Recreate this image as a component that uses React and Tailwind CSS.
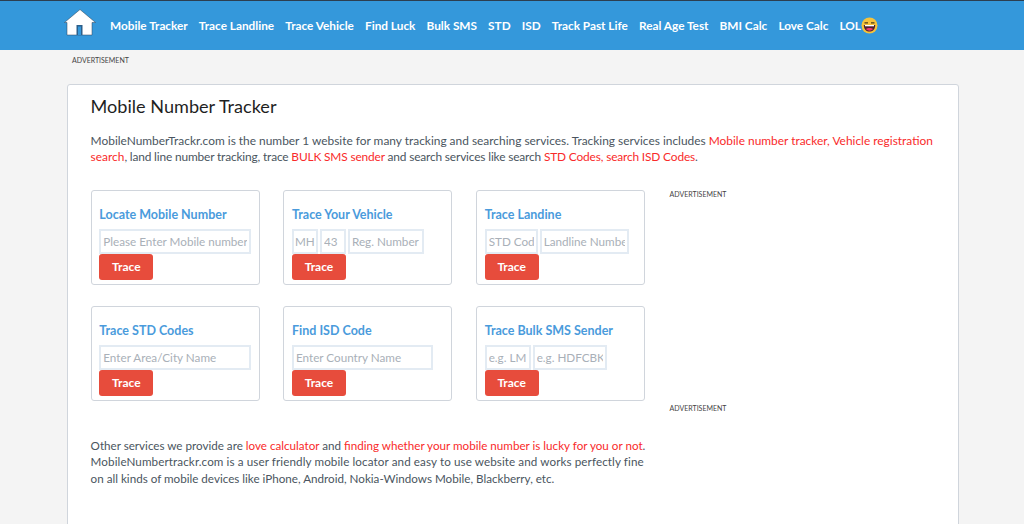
const nav = ["Mobile Tracker","Trace Landline","Trace Vehicle","Find Luck","Bulk SMS","STD","ISD","Track Past Life","Real Age Test","BMI Calc","Love Calc"];

function Home() {
  return (
    <svg width="32" height="27" viewBox="0 0 32 27" className="mb-[6px] shrink-0">
      <path d="M16 0.5 L31.5 13.5 L28 13.5 L28 26 L3 26 L3 13.5 L0.5 13.5 Z" fill="#fff" stroke="#2c3e50" strokeWidth="0.5" />
      <rect x="12.5" y="16" width="6" height="10" fill="#2c5f8a" />
      <rect x="14" y="17.5" width="3" height="8.5" fill="#3498db" />
    </svg>
  );
}

function Lol() {
  return (
    <svg width="17" height="17" viewBox="0 0 17 17" className="shrink-0">
      <circle cx="8.5" cy="8.5" r="8" fill="#f5c33b" />
      <path d="M3.5 5.8 L7 5.8 M10 5.8 L13.5 5.8" stroke="#4a3a1a" strokeWidth="1.3" />
      <path d="M2.8 8 H14.2 C14.2 12.5 11.5 14.6 8.5 14.6 C5.5 14.6 2.8 12.5 2.8 8 Z" fill="#4a2030" />
      <path d="M4 8 H13 V9.3 H4 Z" fill="#fff" />
      <path d="M5 12 C6.5 10.8 10.5 10.8 12 12 C10.5 14.2 6.5 14.2 5 12 Z" fill="#f0386b" />
    </svg>
  );
}

function Field({ className, placeholder }) {
  return (
    <input
      readOnly
      placeholder={placeholder}
      className={"h-[25px] border-2 border-[#e3ebf3] bg-white px-[2px] text-[11.7px] text-[#555] outline-none placeholder:text-[#a9b0b8] " + className}
    />
  );
}

function Card({ title, children }) {
  return (
    <div className="h-[95px] w-[169px] rounded-[3px] border border-[#d0d5dc] bg-white px-[7.7px] pt-[15px]">
      <div className="h-[17px] text-[12.5px] font-bold leading-[17px] text-[#4a9bdc]">{title}</div>
      <div className="mt-[6px] flex h-[25px] gap-[2px]">{children}</div>
      <button className="block h-[26.5px] w-[54px] rounded-[3px] bg-[#e74c3c] text-[12px] font-bold text-white">Trace</button>
    </div>
  );
}

const Red = ({ children }) => <span className="text-[#f92a2a]">{children}</span>;

export default function App() {
  return (
    <div className="h-[524px] overflow-hidden bg-[#f4f4f4] font-['Lato','Open_Sans',sans-serif] text-[#34495e]">
      <header className="flex h-[50px] items-center border-t border-t-[#2c3e50] bg-[#3498db] pl-[64px]">
        <Home />
        <nav className="ml-[14px] flex items-center gap-[11.1px] text-[11.8px] font-bold text-white">
          {nav.map((n) => <span key={n} className="whitespace-nowrap">{n}</span>)}
          <span className="flex items-center">LOL<Lol /></span>
        </nav>
      </header>
      <div className="ml-[72px] h-[34px] pt-[5px] text-[7px] leading-[10px] text-[#444]">ADVERTISEMENT</div>
      <main className="ml-[67px] w-[892px] rounded-t-[3px] border border-[#d0d5dc] bg-white px-[22.6px] pb-[80px] pt-[9px]">
        <h1 className="text-[18.1px] font-normal leading-[24px] text-[#1f1f1f]">Mobile Number Tracker</h1>
        <p className="mt-[14.5px] text-[11.92px] leading-[16.5px] text-[#4a5560]">
          MobileNumberTrackr.com is the number 1 website for many tracking and searching services. Tracking services includes <Red>Mobile number tracker, Vehicle registration search</Red><span className="tracking-[-0.16px]">, land line number tracking, trace <Red>BULK SMS sender</Red> and search services like search <Red>STD Codes, search ISD Codes</Red>.</span>
        </p>
        <div className="mt-[24px] flex gap-[24px]">
          <div className="w-[555px]">
            <div className="grid grid-cols-[169px_169px_169px] gap-x-[23.7px] gap-y-[21px]">
              <Card title="Locate Mobile Number"><Field className="w-[152px]" placeholder="Please Enter Mobile number" /></Card>
              <Card title="Trace Your Vehicle">
                <Field className="w-[26px] !px-[1px]" placeholder="MH" />
                <Field className="w-[26px]" placeholder="43" />
                <Field className="w-[76.5px]" placeholder="Reg. Number" />
              </Card>
              <Card title="Trace Landine">
                <Field className="w-[53px]" placeholder="STD Code" />
                <Field className="w-[89px]" placeholder="Landline Number" />
              </Card>
              <Card title="Trace STD Codes"><Field className="w-[152px]" placeholder="Enter Area/City Name" /></Card>
              <Card title="Find ISD Code"><Field className="w-[141px]" placeholder="Enter Country Name" /></Card>
              <Card title="Trace Bulk SMS Sender">
                <Field className="w-[46px]" placeholder="e.g. LM" />
                <Field className="w-[74px]" placeholder="e.g. HDFCBK" />
              </Card>
            </div>
            <p className="mt-[37px] text-[11.65px] leading-[16.5px] text-[#4a5560]">
              Other services we provide are <Red>love calculator</Red> and <Red>finding whether your mobile number is lucky for you or not</Red>. <span className="tracking-[0.1px]">MobileNumbertrackr.com is a user friendly mobile locator and easy to use website and works perfectly fine</span> on all kinds of mobile devices like iPhone, Android, Nokia-Windows Mobile, Blackberry, etc.
            </p>
          </div>
          <aside className="-mt-[0.5px] text-[7px] leading-[10px] text-[#444]">
            <div>ADVERTISEMENT</div>
            <div className="mt-[204px]">ADVERTISEMENT</div>
          </aside>
        </div>
      </main>
    </div>
  );
}
